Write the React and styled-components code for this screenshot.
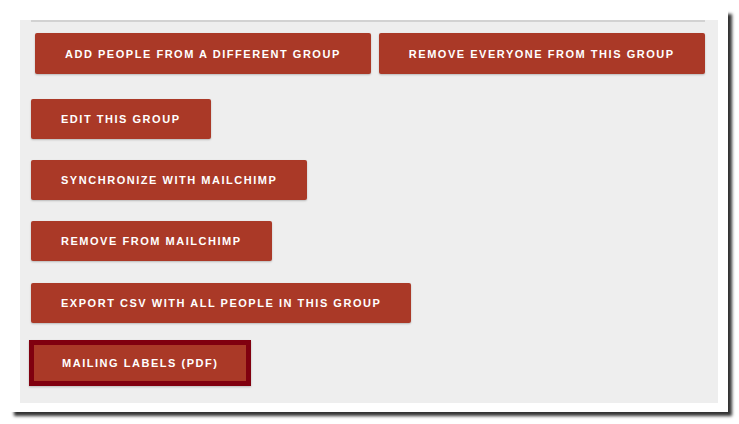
import React from "react";
import styled, { createGlobalStyle } from "styled-components";

const Global = createGlobalStyle`
  html, body {
    margin: 0;
    padding: 0;
    background: #ffffff;
  }
  body {
    font-family: "Liberation Sans", Arial, sans-serif;
    min-height: 424px;
  }
`;

const Frame = styled.div`
  box-sizing: border-box;
  margin: 10px 0 0 10px;
  width: 718px;
  height: 402px;
  padding: 10px;
  background: #ffffff;
  box-shadow: 4px 4px 3px rgba(0, 0, 0, 0.8);
`;

const Panel = styled.section`
  box-sizing: border-box;
  height: 383px;
  background: #eeeeee;
  padding: 0 13px 0 11px;
  display: flex;
  flex-direction: column;
  align-items: flex-start;
`;

const Rule = styled.hr`
  align-self: stretch;
  margin: 0;
  border: 0;
  height: 2px;
  background: #d2d2d2;
`;

const Row = styled.div`
  display: flex;
  gap: 8px;
  margin-top: ${(p) => p.$top}px;
  margin-left: ${(p) => p.$indent || 0}px;
`;

const Button = styled.button`
  box-sizing: border-box;
  height: ${(p) => p.$height || 40}px;
  padding: 0 ${(p) => p.$pad || 30}px;
  background: #aa3927;
  color: #ffffff;
  border: ${(p) => (p.$focused ? "5px solid #80000f" : "0")};
  border-radius: ${(p) => (p.$focused ? "0" : "2px")};
  box-shadow: 0 1px 2px rgba(0, 0, 0, 0.22);
  font-family: "Liberation Sans", Arial, sans-serif;
  font-weight: 700;
  font-size: 11px;
  letter-spacing: 1.53px;
  text-transform: uppercase;
  white-space: nowrap;
  cursor: pointer;
  margin-left: ${(p) => (p.$focused ? -2 : 0)}px;
`;

export default function App() {
  return (
    <>
      <Global />
      <Frame>
        <Panel>
          <Rule />
          <Row $top={11} $indent={4}>
            <Button $height={41}>Add people from a different group</Button>
            <Button $height={41}>Remove everyone from this group</Button>
          </Row>
          <Row $top={25}>
            <Button>Edit this group</Button>
          </Row>
          <Row $top={21}>
            <Button>Synchronize with MailChimp</Button>
          </Row>
          <Row $top={21}>
            <Button>Remove from MailChimp</Button>
          </Row>
          <Row $top={22}>
            <Button>Export CSV with all people in this group</Button>
          </Row>
          <Row $top={17}>
            <Button $focused $height={46} $pad={28}>Mailing labels (PDF)</Button>
          </Row>
        </Panel>
      </Frame>
    </>
  );
}
